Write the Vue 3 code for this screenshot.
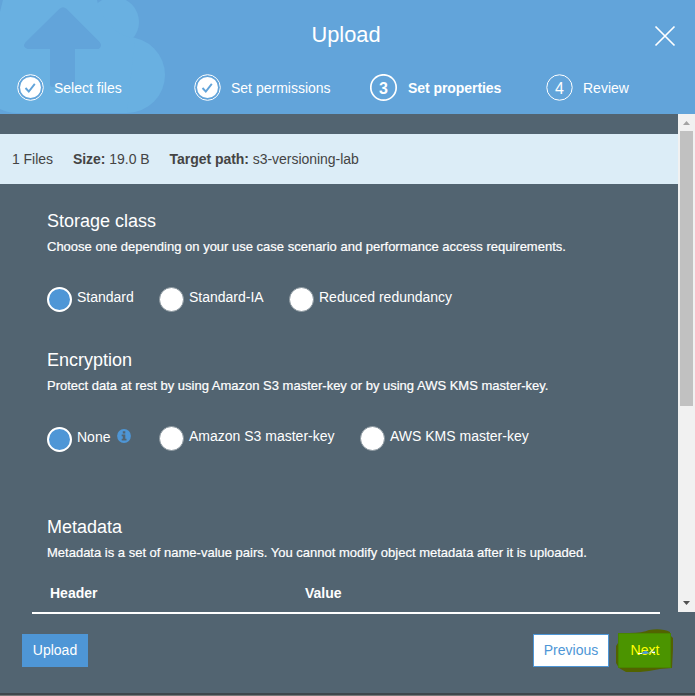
<script setup>
const steps = [
  { n: 1, label: 'Select files', state: 'done', at: 's1' },
  { n: 2, label: 'Set permissions', state: 'done', at: 's2' },
  { n: 3, label: 'Set properties', state: 'current', at: 's3' },
  { n: 4, label: 'Review', state: 'todo', at: 's4' },
]
const storage = [
  { label: 'Standard', on: true, cls: 'w112' },
  { label: 'Standard-IA', cls: 'w130' },
  { label: 'Reduced redundancy' },
]
const encryption = [
  { label: 'None', on: true, info: true, cls: 'w112 low' },
  { label: 'Amazon S3 master-key', cls: 'w201' },
  { label: 'AWS KMS master-key' },
]
</script>

<template>
  <div class="dialog">
    <header class="head">
      <svg class="cloud" width="170" height="114" viewBox="0 0 170 114">
        <g fill="#69b0e1">
          <circle cx="114" cy="22" r="25" />
          <circle cx="127" cy="75" r="38" />
          <path d="M0 12L3 0H97C101 20 118 37 135 38L127 113H17Q8 113 0 109Z" />
        </g>
        <path d="M59.5 8.8Q63 5.5 66.5 8.8L99.6 42Q103 46 98.500 49H75V84Q75 87 72 87H53Q50 87 50 84V49H27.500Q22 47 25.300 42.500Z" fill="#62a4da" />
      </svg>
      <h1>Upload</h1>
      <svg class="close" width="22" height="22" viewBox="0 0 22 22"><path d="M1.500 1.500L20.500 20.500M20.500 1.500L1.500 20.500" stroke="#fff" stroke-width="1.700" /></svg>
      <nav class="steps">
        <div v-for="s in steps" :key="s.n" class="step" :class="[s.state, s.at]">
          <svg width="28" height="28" viewBox="0 0 28 28">
            <template v-if="s.state === 'done'">
              <circle cx="13.500" cy="13.500" r="12.800" fill="#62a4da" stroke="#fff" stroke-width="1" />
              <circle cx="13.500" cy="13.500" r="10.500" fill="#fff" />
              <path d="M8.500 14L11.800 17.500L17.800 9.800" fill="none" stroke="#62a4da" stroke-width="1.900" />
            </template>
            <template v-else>
              <circle cx="13.500" cy="13.500" r="12.700" fill="none" stroke="#fff" :stroke-width="s.state === 'current' ? 1.7 : 1" />
              <text x="13.500" y="19.500" text-anchor="middle" fill="#fff" font-size="16">{{ s.n }}</text>
            </template>
          </svg>
          <span>{{ s.label }}</span>
        </div>
      </nav>
    </header>

    <div class="body">
      <main>
        <div class="summary">
          <span>1 Files</span>
          <span><b>Size:</b> 19.0 B</span>
          <span><b>Target path:</b> s3-versioning-lab</span>
        </div>
        <section class="sec storage">
          <h2>Storage class</h2>
          <p>Choose one depending on your use case scenario and performance access requirements.</p>
          <div class="radios">
            <label v-for="o in storage" :key="o.label" :class="o.cls"><i class="dot" :class="{ on: o.on }"></i><span>{{ o.label }}</span></label>
          </div>
        </section>
        <section class="sec encryption">
          <h2>Encryption</h2>
          <p>Protect data at rest by using Amazon S3 master-key or by using AWS KMS master-key.</p>
          <div class="radios">
            <label v-for="o in encryption" :key="o.label" :class="o.cls">
              <i class="dot" :class="{ on: o.on }"></i><span>{{ o.label }}</span>
              <svg v-if="o.info" class="info" width="14" height="14" viewBox="0 0 14 14">
                <circle cx="7" cy="7" r="6.900" fill="#4e96d6" />
                <path d="M5.800 2.300H8.300V4.500H5.800ZM4.700 5.500H8.300V9.800H9.500V11.500H4.700V9.800H5.800V7.200H4.700Z" fill="#526471" />
              </svg>
            </label>
          </div>
        </section>
        <section class="sec metadata">
          <h2>Metadata</h2>
          <p>Metadata is a set of name-value pairs. You cannot modify object metadata after it is uploaded.</p>
        </section>
        <div class="thead"><b>Header</b><b>Value</b></div>
      </main>
      <div class="scroll">
        <svg width="17" height="17" viewBox="0 0 17 17"><path d="M5 11L8.500 7L12 11Z" fill="#a3a3a3" /></svg>
        <div class="thumb"></div>
        <svg class="down" width="17" height="17" viewBox="0 0 17 17"><path d="M5 6L8.500 10L12 6Z" fill="#505050" /></svg>
      </div>
    </div>

    <footer>
      <button class="btn upload">Upload</button>
      <button class="btn prev">Previous</button>
      <div class="next">
        <svg width="60" height="46" viewBox="0 0 60 46">
          <path d="M3 5L14 4Q28 4 34 1Q47-1 55 3V6L58 9V20L57 39L45 40L34 42L25 43H11L4 39L1 34V17L3 14Z" fill="#526300" />
          <rect x="3.500" y="4.500" width="52" height="34" fill="#4b9400" stroke="#488500" />
        </svg>
        <button>Next</button>
        <svg width="60" height="46" viewBox="0 0 60 46">
          <path d="M25 24.500L31 21.500L34 24L31 25ZM36 23L40 22V24.500Z" fill="#4e9bd6" />
          <path d="M23 24.500H27M34 24.500L38 20.500M37 23.500H40" stroke="#fff" stroke-width="1" />
        </svg>
      </div>
    </footer>
    <div class="edge"></div>
  </div>
</template>

<style>
body { margin: 0; overflow: hidden; background: #526471; }
</style>
<style scoped>
.dialog { width: 695px; height: 696px; display: flex; flex-direction: column; font: 14px/20px "Liberation Sans", Arial, sans-serif; color: #fff; background: #526471; overflow: hidden; }
.head { position: relative; height: 114px; flex: none; background: #62a4da; }
.cloud { position: absolute; left: 0; top: 0; }
h1 { position: relative; margin: 0; padding: 20px 0 0; width: 692px; text-align: center; font-size: 21.800px; line-height: 30px; font-weight: 400; }
.close { position: absolute; left: 654px; top: 25px; }
.steps { position: relative; display: flex; padding: 24px 0 0 17px; }
.step { display: flex; align-items: flex-start; gap: 9px; height: 28px; white-space: nowrap; }
.step svg { flex: none; }
.s1 { width: 177px; }
.s2 { width: 176px; }
.s3 { width: 176px; }
.s3 span { padding-left: 1px; letter-spacing: -0.060px; }
.step span { padding-top: 4px; }
.current { font-weight: 700; }
.body { display: flex; height: 498px; flex: none; }
main { width: 678px; padding-top: 20px; box-sizing: border-box; }
.summary { display: flex; gap: 20px; height: 50px; padding-left: 12px; align-items: center; background: #dcedf7; color: #444; letter-spacing: -0.040px; }
.sec { padding-left: 47px; box-sizing: border-box; }
.storage { height: 139px; padding-top: 25px; }
.encryption { height: 167px; padding-top: 25px; }
.metadata { height: 94px; padding-top: 25px; }
h2 { margin: 0; font-size: 18px; line-height: 24px; font-weight: 400; }
p { margin: 5px 0 0; font-size: 13px; line-height: 18px; white-space: nowrap; -webkit-text-stroke: 0.200px #fff; }
.radios { display: flex; padding-top: 30px; }
label { display: flex; gap: 5px; height: 26px; white-space: nowrap; }
label.low { padding-top: 1px; }
label span { line-height: 22px; }
.dot { width: 25px; height: 25px; margin-top: 0.500px; flex: none; box-sizing: border-box; border-radius: 50%; background: #fff; border: 1px solid #89959d; }
.dot.on { border: 2px solid #fff; background: #4e96d6; }
.w112 { width: 112px; }
.w130 { width: 130px; }
.w201 { width: 201px; }
.info { margin: 3px 0 0 2px; }
.thead { display: flex; width: 628px; height: 30px; box-sizing: border-box; margin-left: 32px; padding-left: 18px; border-bottom: 2px solid #fff; }
.thead b { width: 255px; line-height: 18px; }
.scroll { width: 17px; display: flex; flex-direction: column; background: #f1f1f1; }
.scroll svg { flex: none; }
.thumb { width: 13px; height: 275px; margin-left: 2px; background: #c1c1c1; }
.down { margin-top: auto; }
footer { display: flex; align-items: flex-start; height: 82px; box-sizing: border-box; padding: 22px 0 0 22px; }
button { font: inherit; color: #fff; padding: 0 0 2px; border: 0; background: none; }
.btn { height: 33px; border: 1px solid #4e96d6; }
.upload { width: 66px; background: #4e96d6; }
.prev { width: 76px; margin-left: 445px; color: #4e96d6; background: #fff; }
.next { display: grid; margin: -5px 0 0 6px; }
.next > * { grid-area: 1 / 1; }
.next button { color: #ff0; padding-bottom: 5px; }
.edge { height: 2px; background: #3f464b; border-bottom: 1px solid #777; margin-top: -1px; }
</style>
